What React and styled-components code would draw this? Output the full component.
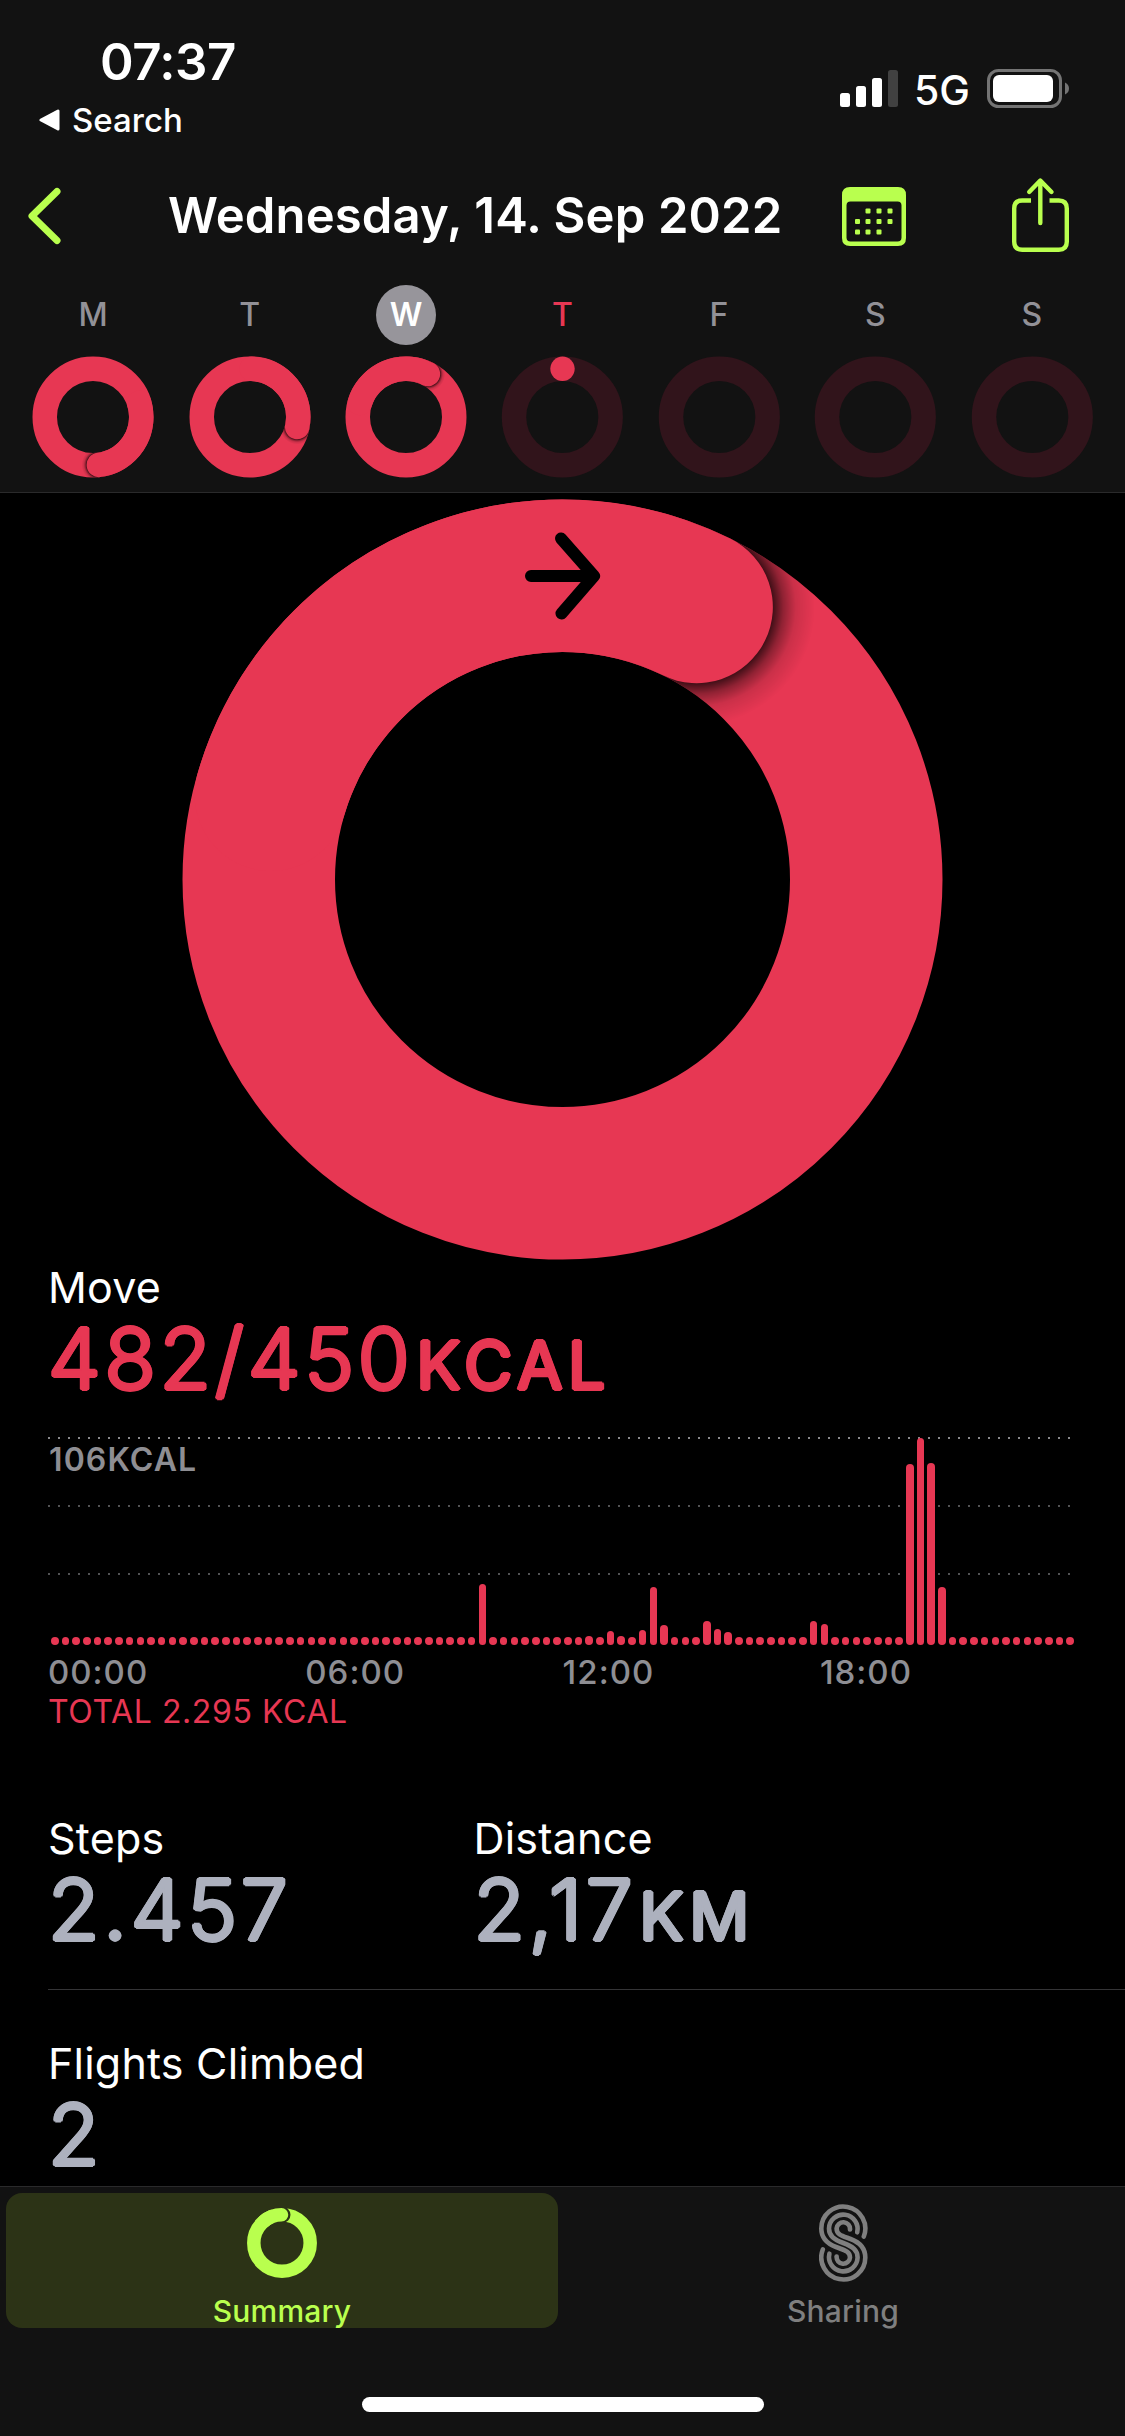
import React from "react";
import styled, { createGlobalStyle } from "styled-components";

const RED = "#e73753";
const GREEN = "#b9ff4e";
const GREY = "#8e8e93";

const GlobalStyle = createGlobalStyle`
  body {
    margin: 0;
    background-color: #000;
    font-family: Inter, "Liberation Sans", sans-serif;
  }
`

const Screen = styled.div`
  width: 1125px;
  height: 2436px;
  display: flex;
  flex-direction: column;
  overflow: hidden;
  color: #fff;
  background-color: #000;
`

const Header = styled.header`
  height: 492px;
  flex-shrink: 0;
  background-color: #121212;
  border-bottom: 1px solid #2a2a2b;
`

const StatusBar = styled.div`
  height: 148px;
  display: flex;
  justify-content: space-between;
  padding: 0 56px 0 39px;
  box-sizing: border-box;
`

const StatusLeft = styled.div`
  padding-top: 32px;
`

const Clock = styled.div`
  margin-left: 61px;
  font-size: 51px;
  font-weight: 600;
  line-height: 60px;
  letter-spacing: -0.5px;
`

const BackToApp = styled.div`
  display: flex;
  align-items: center;
  gap: 12px;
  margin-top: 8px;
  font-size: 33px;
  font-weight: 500;
  line-height: 40px;
`

const StatusRight = styled.div`
  display: flex;
  align-items: center;
  height: 39px;
  padding-top: 69px;
`

const Network = styled.span`
  margin: 4px 17px 0 16px;
  font-size: 41px;
  font-weight: 500;
  line-height: 39px;
`

const NavBar = styled.nav`
  height: 136px;
  display: grid;
  grid-template-columns: 140px 674px 170px 57px;
  align-items: center;
  padding-left: 28px;

  svg {
    display: block;
  }
`

const NavTitle = styled.h1`
  margin: 0;
  font-size: 49px;
  font-weight: 600;
  line-height: 60px;
  letter-spacing: 0.15px;
  white-space: nowrap;
`

const ShareIcon = styled.svg`
  margin-bottom: 5px;
`

const Week = styled.div`
  display: grid;
  grid-template-columns: repeat(7, 1fr);
  padding: 1px 15px 0;
`

const Day = styled.div`
  display: flex;
  flex-direction: column;
  align-items: center;
  gap: 11px;
`

const DayLetter = styled.span`
  width: 60px;
  height: 60px;
  border-radius: 50%;
  text-align: center;
  font-size: 32px;
  font-weight: ${(props) => (props.$selected ? 600 : 500)};
  line-height: 60px;
  color: ${(props) => (props.$selected ? "#fff" : props.$today ? RED : "#929197")};
  background-color: ${(props) => (props.$selected ? "#97959b" : "transparent")};
`

const Content = styled.main`
  flex: 1;
  min-height: 0;
  overflow: hidden;
`

const RingArea = styled.div`
  display: flex;
  justify-content: center;
  padding-top: 6px;
  height: 763px;
`

const Label = styled.h2`
  margin: 0;
  font-size: 43px;
  font-weight: 400;
  line-height: 50px;
  letter-spacing: 0.2px;
`

/* light glyphs thickened with round shadows, gives the rounded numerals */
const Value = styled.div`
  margin-top: 1px;
  font-size: 84px;
  font-weight: 300;
  line-height: 91px;
  letter-spacing: 3.7px;
  white-space: nowrap;
  color: ${(props) => props.$color || "#adb1be"};
  text-shadow: 2px 0 0, -2px 0 0, 0 2px 0, 0 -2px 0,
    1.4px 1.4px 0, -1.4px 1.4px 0, 1.4px -1.4px 0, -1.4px -1.4px 0;
`

const Unit = styled.span`
  margin-left: 3px;
  font-size: 66px;
  font-weight: 400;
  line-height: 0;
  letter-spacing: 5.7px;
`

const MoveSection = styled.section`
  padding-left: 48px;
`

const Chart = styled.div`
  position: relative;
  width: 1022px;
  height: 208px;
  margin-top: 33px;
  background-image:
    linear-gradient(90deg, #88888b 2px, transparent 2px),
    linear-gradient(90deg, #535355 2px, transparent 2px),
    linear-gradient(90deg, #535355 2px, transparent 2px);
  background-size: 10px 2px;
  background-position: 0 0, 0 68px, 0 136px;
  background-repeat: repeat-x;
`

const ChartMax = styled.span`
  position: absolute;
  top: 5px;
  left: 1px;
  font-size: 32px;
  font-weight: 600;
  line-height: 36px;
  letter-spacing: 1.1px;
  color: ${GREY};
`

const Bars = styled.div`
  height: 208px;
  display: flex;
  align-items: flex-end;
  justify-content: space-between;
  margin: 0 -4px 0 3px;
`

const Bar = styled.div`
  width: 7.6px;
  border-radius: 4px;
  background-color: ${RED};
`

const TimeAxis = styled.div`
  display: grid;
  grid-template-columns: repeat(4, 257.3px);
  margin-top: 7px;
  font-size: 33px;
  font-weight: 500;
  line-height: 40px;
  letter-spacing: 1px;
  color: ${GREY};
`

const Total = styled.div`
  margin-top: 1px;
  font-size: 32px;
  font-weight: 400;
  line-height: 38px;
  letter-spacing: 0.6px;
  color: ${RED};
`

const Stats = styled.section`
  display: grid;
  grid-template-columns: 425.5px 1fr;
  height: 107px;
  margin-left: 48px;
  padding-top: ${(props) => props.$top};
  padding-bottom: 69px;
  border-bottom: ${(props) => (props.$line ? "1px solid #343436" : "none")};
`

const TabBar = styled.footer`
  height: 249px;
  flex-shrink: 0;
  background-color: #121212;
  border-top: 1px solid #2a2a2b;
`

const Tabs = styled.div`
  display: grid;
  grid-template-columns: 552px 552px;
  gap: 9px;
  padding: 6px 6px 0;
`

const Tab = styled.div`
  height: 135px;
  display: flex;
  flex-direction: column;
  align-items: center;
  border-radius: 16px;
  font-size: 30px;
  font-weight: 500;
  color: ${(props) => (props.$active ? GREEN : "#7f7f7f")};
  background-color: ${(props) => (props.$active ? "#2c3316" : "transparent")};
`

const TabIcon = styled.div`
  height: 100px;
  flex-shrink: 0;
  display: flex;
  align-items: center;
`

const TabText = styled.span`
  line-height: 36px;
  letter-spacing: 0.2px;
`

const HomeIndicator = styled.div`
  width: 402px;
  height: 15px;
  margin: 69px auto 0;
  border-radius: 8px;
  background-color: #fff;
`

const week = [
  { letter: "M", end: 173 },
  { letter: "T", end: 102 },
  { letter: "W", end: 27, selected: true },
  { letter: "T", today: true },
  { letter: "F" },
  { letter: "S" },
  { letter: "S" },
]

// quarter-hour slots that are higher than the idle dot
const peaks = {
  40: 61, 50: 9.5, 52: 14.5, 53: 9, 55: 14.7, 56: 57.7, 57: 19.7,
  61: 23.7, 62: 15.7, 63: 12.7, 71: 24, 72: 21,
  80: 180.7, 81: 207, 82: 182, 83: 58.3,
}
const slots = Array.from({ length: 96 }, (_, i) => peaks[i] || 7.6)

const point = (c, r, deg) => {
  const a = (deg * Math.PI) / 180
  return [c + r * Math.sin(a), c - r * Math.cos(a)]
}

const Ring = ({ id, size, inner, end, spread, children }) => {
  const c = size / 2
  const outer = c - 0.5
  const stroke = outer - inner
  const r = inner + stroke / 2
  const [ex, ey] = point(c, r, end)
  const [sx, sy] = point(c, r, end - 100)
  const cap = stroke / 2
  return (
    <svg width={size} height={size} viewBox={`0 0 ${size} ${size}`}>
      <defs>
        <radialGradient id={`${id}-g`} gradientUnits="userSpaceOnUse" cx={ex} cy={ey} r={cap + spread}>
          <stop offset={cap / (cap + spread)} stopColor="#000" stopOpacity="0.72" />
          <stop offset={(cap + spread * 0.25) / (cap + spread)} stopColor="#000" stopOpacity="0.38" />
          <stop offset={(cap + spread * 0.55) / (cap + spread)} stopColor="#000" stopOpacity="0.12" />
          <stop offset="1" stopColor="#000" stopOpacity="0" />
        </radialGradient>
        <mask id={`${id}-m`}>
          <circle cx={c} cy={c} r={r} fill="none" stroke="#fff" strokeWidth={stroke} />
        </mask>
      </defs>
      <circle cx={c} cy={c} r={r} fill="none" stroke={RED} strokeWidth={stroke} />
      <circle cx={ex} cy={ey} r={cap + spread} fill={`url(#${id}-g)`} mask={`url(#${id}-m)`} />
      <path
        d={`M${sx} ${sy}A${r} ${r} 0 0 1 ${ex} ${ey}`}
        fill="none"
        stroke={RED}
        strokeWidth={stroke}
        strokeLinecap="round"
      />
      {children}
    </svg>
  )
}

const EmptyRing = ({ dot }) => (
  <svg width="122" height="122" viewBox="0 0 122 122">
    <circle cx="61.3" cy="61" r="48.3" fill="none" stroke="#31141b" strokeWidth="24.5" />
    {dot && <circle cx="61.5" cy="12.8" r="12.2" fill={RED} />}
  </svg>
)

const App = () => {
  return (
    <Screen>
      <GlobalStyle />
      <Header>
        <StatusBar>
          <StatusLeft>
            <Clock>07:37</Clock>
            <BackToApp>
              <svg width="21" height="22" viewBox="0 0 21 22">
                <path d="M2 11L19 2V20Z" fill="#fff" stroke="#fff" strokeWidth="3" strokeLinejoin="round" />
              </svg>
              Search
            </BackToApp>
          </StatusLeft>
          <StatusRight>
            <svg width="58" height="37" viewBox="0 0 58 37">
              <rect x="0" y="23" width="10" height="14" rx="2.5" fill="#fff" />
              <rect x="16" y="16" width="10" height="21" rx="2.5" fill="#fff" />
              <rect x="32" y="8" width="10" height="29" rx="2.5" fill="#fff" />
              <rect x="48" y="0" width="10" height="37" rx="2.5" fill="#414141" />
            </svg>
            <Network>5G</Network>
            <svg width="82" height="39" viewBox="0 0 82 39">
              <rect x="1.5" y="1.5" width="72" height="36" rx="10" fill="none" stroke="#747474" strokeWidth="3" />
              <rect x="6" y="6" width="60" height="27" rx="6" fill="#fff" />
              <path d="M78 13.5C81 15 82 17 82 19.5S81 24 78 25.5Z" fill="#747474" />
            </svg>
          </StatusRight>
        </StatusBar>
        <NavBar>
          <svg width="33" height="58" viewBox="0 0 33 58">
            <path d="M29 4.5L4 29L29 53.5" fill="none" stroke={GREEN} strokeWidth="7" strokeLinecap="round" strokeLinejoin="round" />
          </svg>
          <NavTitle>Wednesday, 14. Sep 2022</NavTitle>
          <svg width="64" height="59" viewBox="0 0 64 59">
            <path
              fill={GREEN}
              fillRule="evenodd"
              d="M8 0H56Q64 0 64 8V51Q64 59 56 59H8Q0 59 0 51V8Q0 0 8 0ZM8.500 14.500Q4.500 14.500 4.500 18.500V50.500Q4.500 54.500 8.500 54.500H55.500Q59.500 54.500 59.500 50.500V18.500Q59.500 14.500 55.500 14.500Z"
            />
            {[[26, 24], [37, 24], [48, 24], [15.500, 34.500], [26, 34.500], [37, 34.500], [48, 34.500], [15.500, 45], [26, 45], [37, 45]].map(([x, y]) => (
              <rect key={`${x}-${y}`} x={x - 2.5} y={y - 2.5} width="5" height="5" rx="1" fill={GREEN} />
            ))}
          </svg>
          <ShareIcon width="57" height="76" viewBox="0 0 57 76">
            <g fill="none" stroke={GREEN} strokeWidth="4.400">
              <path d="M19 24.500H10.200Q2.200 24.500 2.200 32.500V65.800Q2.200 73.800 10.200 73.800H46.800Q54.800 73.800 54.800 65.800V32.500Q54.800 24.500 46.800 24.500H37.500" />
              <path d="M28.300 5V47M17.200 16L28.300 4.500L39.500 16" strokeLinecap="round" strokeLinejoin="round" />
            </g>
          </ShareIcon>
        </NavBar>
        <Week>
          {week.map((day, i) => (
            <Day key={i}>
              <DayLetter $selected={day.selected} $today={day.today}>{day.letter}</DayLetter>
              {day.end ? (
                <Ring id={`day${i}`} size={122} inner={36} end={day.end} spread={5} />
              ) : (
                <EmptyRing dot={day.today} />
              )}
            </Day>
          ))}
        </Week>
      </Header>

      <Content>
        <RingArea>
          <Ring id="move" size={761} inner={227.5} end={26.2} spread={42}>
            <path
              d="M349 77H411M379 39.500L412 77L379.500 114.500"
              fill="none"
              stroke="#000"
              strokeWidth="12"
              strokeLinecap="round"
              strokeLinejoin="round"
            />
          </Ring>
        </RingArea>

        <MoveSection>
          <Label>Move</Label>
          <Value $color={RED}>482/450<Unit>KCAL</Unit></Value>
          <Chart>
            <ChartMax>106KCAL</ChartMax>
            <Bars>
              {slots.map((height, i) => (
                <Bar key={i} style={{ height }} />
              ))}
            </Bars>
          </Chart>
          <TimeAxis>
            <span>00:00</span>
            <span>06:00</span>
            <span>12:00</span>
            <span>18:00</span>
          </TimeAxis>
          <Total>TOTAL 2.295 KCAL</Total>
        </MoveSection>

        <Stats $top="82px" $line>
          <div>
            <Label>Steps</Label>
            <Value>2.457</Value>
          </div>
          <div>
            <Label>Distance</Label>
            <Value>2,17<Unit>KM</Unit></Value>
          </div>
        </Stats>
        <Stats $top="48px">
          <div>
            <Label>Flights Climbed</Label>
            <Value>2</Value>
          </div>
        </Stats>
      </Content>

      <TabBar>
        <Tabs>
          <Tab $active>
            <TabIcon>
              <svg width="70" height="70" viewBox="0 0 70 70">
                <circle cx="35" cy="35" r="28.2" fill="none" stroke={GREEN} strokeWidth="13.500" />
                <path d="M30 7.200Q33 6.800 35.500 6.800" fill="none" stroke="#2c3316" strokeWidth="16" strokeLinecap="round" />
                <path d="M17 13.200A28.200 28.200 0 0 1 34.500 6.800" fill="none" stroke={GREEN} strokeWidth="13.500" strokeLinecap="round" />
              </svg>
            </TabIcon>
            <TabText>Summary</TabText>
          </Tab>
          <Tab>
            <TabIcon>
              <svg width="49" height="78" viewBox="0 0 49 78">
                <g fill="none" stroke="currentColor" strokeWidth="4.600" strokeLinecap="round">
                  <path d="M44.800 32.500A22 22 0 1 0 2.300 24.500C2.300 35 9 40 17 43C25 46 31 47 31 53.500A6.700 6.700 0 1 1 17.600 52.500" />
                  <path d="M38.200 28.300A14.300 14.300 0 1 0 10 24.500C10 32 15 35.500 24.300 39C33.600 42.500 38.600 46 38.600 53.500A14.300 14.300 0 1 1 10.400 49.700" />
                  <path d="M31 25.500A6.700 6.700 0 1 0 17.600 24.500C17.600 31 23.600 32 31.600 35C39.600 38 46.300 43 46.300 53.500A22 22 0 1 1 3.800 45.500" />
                </g>
              </svg>
            </TabIcon>
            <TabText>Sharing</TabText>
          </Tab>
        </Tabs>
        <HomeIndicator />
      </TabBar>
    </Screen>
  )
}

export default App
